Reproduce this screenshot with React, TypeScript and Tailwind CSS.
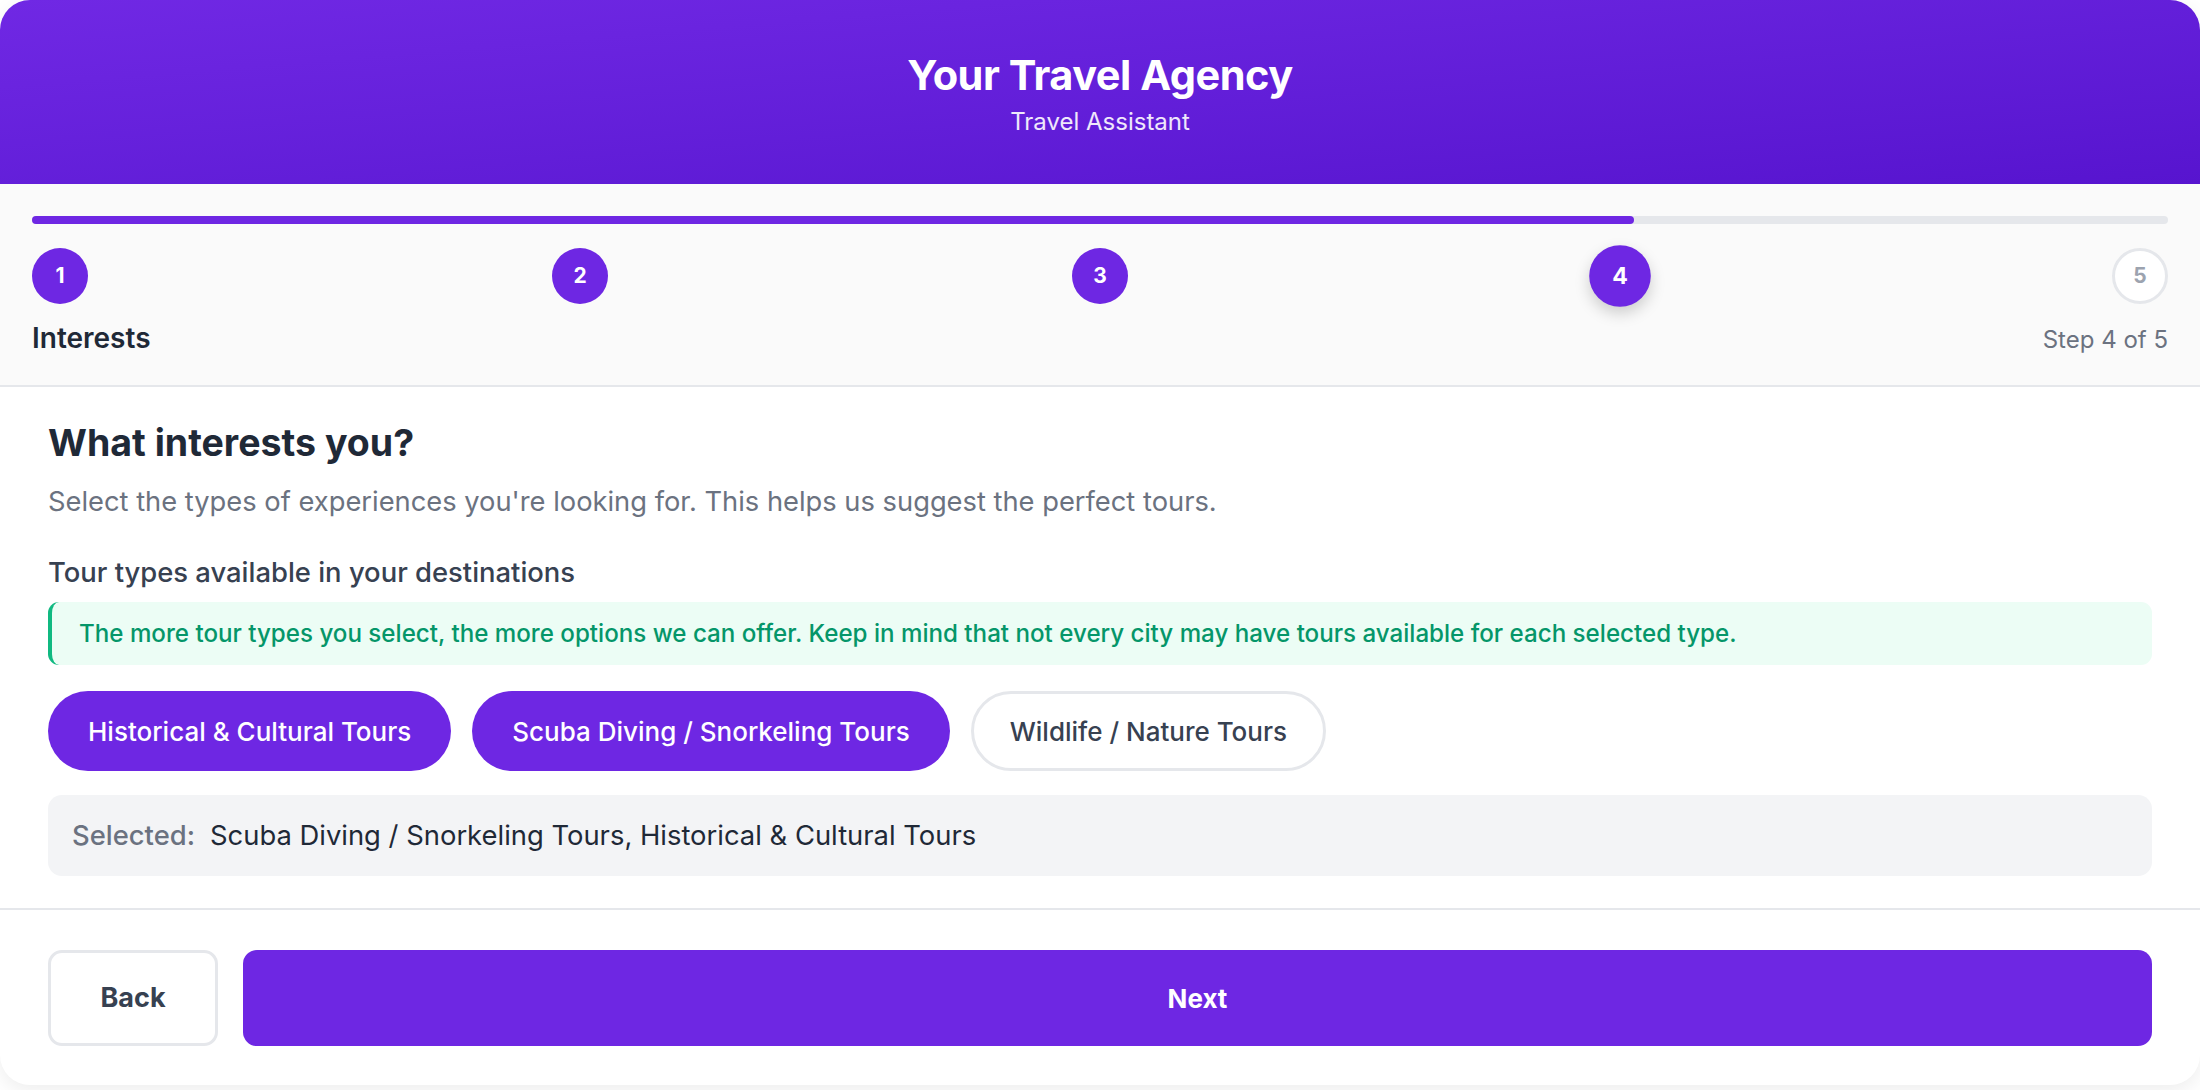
import React from 'react';

const steps = [1, 2, 3, 4, 5];
const current = 4;

const tourTypes = [
  { id: 'history', label: 'Historical & Cultural Tours', selected: true },
  { id: 'scuba', label: 'Scuba Diving / Snorkeling Tours', selected: true },
  { id: 'wildlife', label: 'Wildlife / Nature Tours', selected: false },
];

const App = () => {
  const font = { fontFamily: 'Inter, "Liberation Sans", sans-serif' };

  return (
    <div className="min-h-[1090px] bg-white" style={font}>
      <div className="rounded-[30px] bg-white overflow-hidden shadow-[0_6px_20px_rgba(0,0,0,0.07)]">
        {/* header */}
        <div className="h-[184px] bg-gradient-to-br from-[#7028e4] to-[#5714cf] text-white text-center pt-[50px]">
          <h1 className="text-[41.5px] leading-[50px] font-bold tracking-[-0.5px]">Your Travel Agency</h1>
          <p className="text-[24px] leading-[32px] mt-[6px] text-white/90">Travel Assistant</p>
        </div>

        {/* steps */}
        <div className="bg-[#fafafa] px-[32px] pt-[32px] pb-[29px] border-b-2 border-[#e5e7eb]">
          <div className="h-[8px] rounded-full bg-[#e5e7eb] mb-[24px]">
            <div className="h-full w-3/4 rounded-full bg-[#6e27e3]" />
          </div>
          <div className="flex justify-between items-center h-[56px]">
            {steps.map((s) => {
              const done = s <= current;
              return (
                <div
                  key={s}
                  className={
                    done
                      ? s === current
                        ? 'w-[56px] h-[56px] rounded-full bg-[#6e27e3] text-white flex items-center justify-center text-[21px] font-bold scale-110 shadow-[0_6px_14px_rgba(0,0,0,0.18)]'
                        : 'w-[56px] h-[56px] rounded-full bg-[#6e27e3] text-white flex items-center justify-center text-[21px] font-bold'
                      : 'w-[56px] h-[56px] rounded-full bg-white border-[3px] border-[#e5e7eb] text-[#9ca3af] flex items-center justify-center text-[21px] font-bold'
                  }
                >
                  {s}
                </div>
              );
            })}
          </div>
          <div className="flex justify-between items-baseline mt-[16px] h-[36px]">
            <span className="text-[28px] leading-[36px] font-semibold text-[#1f2937]">Interests</span>
            <span className="text-[24px] leading-[36px] text-[#6b7280]">Step 4 of 5</span>
          </div>
        </div>

        {/* content */}
        <div className="px-[48px] pt-[33px] pb-[32px] border-b-2 border-[#e5e7eb]">
          <h2 className="text-[37.5px] leading-[46px] font-bold text-[#1f2937]">What interests you?</h2>
          <p className="text-[27.3px] leading-[36px] mt-[18px] text-[#6b7280]">
            Select the types of experiences you're looking for. This helps us suggest the perfect tours.
          </p>
          <p className="text-[27.4px] leading-[36px] mt-[34px] font-medium text-[#374151]">
            Tour types available in your destinations
          </p>
          <div className="mt-[12px] rounded-[11px] border-l-4 border-[#10b981] bg-[#ecfdf5] px-[27px] py-[16px]">
            <p className="text-[24.15px] leading-[31px] font-medium text-[#059669]">
              The more tour types you select, the more options we can offer. Keep in mind that not every city may have tours available for each selected type.
            </p>
          </div>
          <div className="flex gap-[21px] mt-[26px]">
            {tourTypes.map((t) =>
              t.selected ? (
                <button
                  key={t.id}
                  className="h-[80px] px-[40px] rounded-full bg-[#6e27e3] text-white text-[26px] font-medium"
                >
                  {t.label}
                </button>
              ) : (
                <button
                  key={t.id}
                  className="h-[80px] px-[36px] rounded-full bg-white border-[3px] border-[#e5e7eb] text-[#374151] text-[26px] font-medium"
                >
                  {t.label}
                </button>
              )
            )}
          </div>
          <div className="mt-[24px] h-[81px] rounded-[14px] bg-[#f3f4f6] px-[24px] flex items-center text-[27.4px]">
            <span className="font-medium text-[#6b7280] mr-[15px]">Selected:</span>
            <span className="text-[#1f2937]">Scuba Diving / Snorkeling Tours, Historical &amp; Cultural Tours</span>
          </div>
        </div>

        {/* footer */}
        <div className="flex gap-[25px] px-[48px] pt-[40px] pb-[39px]">
          <button className="w-[170px] h-[96px] rounded-[14px] border-[3px] border-[#e5e7eb] bg-white text-[27px] font-bold text-[#374151]">
            Back
          </button>
          <button className="flex-1 h-[96px] rounded-[14px] bg-[#6e27e3] text-[26px] font-bold text-white">
            Next
          </button>
        </div>
      </div>
    </div>
  );
};

export default App;
